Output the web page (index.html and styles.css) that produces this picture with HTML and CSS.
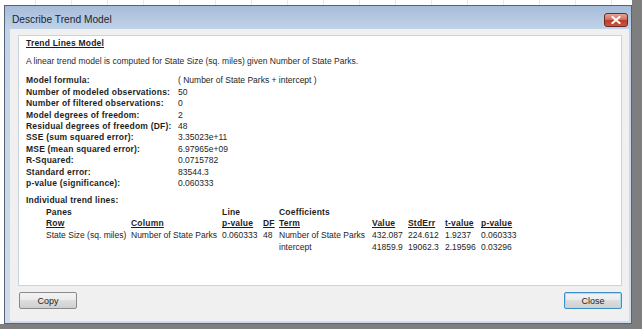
FILE: index.html
```html
<!DOCTYPE html>
<html lang="en">
<head>
  <meta charset="UTF-8" />
  <title>Describe Trend Model</title>
  <link rel="stylesheet" href="styles.css">
</head>
<body>

  <div class="desk">
    <div class="window">
      <div class="titlebar">
        <span class="title">Describe Trend Model</span>
        <button class="close-x" title="Close">
          <svg width="10" height="8" viewBox="0 0 10 8">
            <path d="M1.5 1 L8.5 7 M8.5 1 L1.5 7" stroke="#fff" stroke-width="2" stroke-linecap="square"/>
          </svg>
        </button>
      </div>

      <div class="client">
        <div class="panel">
          <div class="heading">Trend Lines Model</div>
          <div class="desc">A linear trend model is computed for State Size (sq. miles) given Number of State Parks.</div>

          <div class="stats">
            <div class="label">Model formula:</div><div>( Number of State Parks + intercept )</div>
            <div class="label">Number of modeled observations:</div><div>50</div>
            <div class="label">Number of filtered observations:</div><div>0</div>
            <div class="label">Model degrees of freedom:</div><div>2</div>
            <div class="label">Residual degrees of freedom (DF):</div><div>48</div>
            <div class="label">SSE (sum squared error):</div><div>3.35023e+11</div>
            <div class="label">MSE (mean squared error):</div><div>6.97965e+09</div>
            <div class="label">R-Squared:</div><div>0.0715782</div>
            <div class="label">Standard error:</div><div>83544.3</div>
            <div class="label">p-value (significance):</div><div>0.060333</div>
          </div>

          <div class="label section">Individual trend lines:</div>
          <div class="lines">
            <div class="label">Panes</div><div></div><div class="label">Line</div><div></div>
            <div class="label">Coefficients</div><div></div><div></div><div></div><div></div>

            <div class="label u">Row</div><div class="label u">Column</div><div class="label u">p-value</div><div class="label u">DF</div>
            <div class="label u">Term</div><div class="label u">Value</div><div class="label u">StdErr</div><div class="label u">t-value</div><div class="label u">p-value</div>

            <div>State Size (sq. miles)</div><div>Number of State Parks</div><div>0.060333</div><div>48</div>
            <div>Number of State Parks</div><div>432.087</div><div>224.612</div><div>1.9237</div><div>0.060333</div>

            <div></div><div></div><div></div><div></div>
            <div>intercept</div><div>41859.9</div><div>19062.3</div><div>2.19596</div><div>0.03296</div>
          </div>
        </div>

        <div class="buttons">
          <button class="btn">Copy</button>
          <button class="btn btn-default">Close</button>
        </div>
      </div>
    </div>
  </div>

</body>
</html>
```

FILE: styles.css
```css
html, body {
  margin: 0;
  padding: 0;
}
body {
  background: #7e7e7e;
  width: 642px;
  height: 329px;
  overflow: hidden;
  font-family: "Liberation Sans", Arial, sans-serif;
  color: #1e1e1e;
}
.desk {
  width: 632px;
  height: 324px;
  box-sizing: border-box;
  padding: 5px 0 0 4px;
  background-color: #fff;
  background-image: repeating-linear-gradient(90deg, transparent 0, transparent 35px, #e8e8e8 35px, #e8e8e8 36px);
}
.window {
  width: 628px;
  height: 319px;
  box-sizing: border-box;
  border: 1px solid #59636f;
  background: linear-gradient(#a6bcd9, #c2d4ea 24px, #cddcee);
  padding: 0 2px 2px 5px;
  display: flex;
  flex-direction: column;
}
.titlebar {
  height: 23px;
  display: flex;
  justify-content: space-between;
  align-items: flex-start;
}
.title {
  font-size: 10.2px;
  line-height: 14px;
  margin: 7px 0 0 2px;
  color: #1b2633;
}
.close-x {
  width: 24px;
  height: 14px;
  margin: 7px 1px 0 0;
  padding: 0;
  border: 1px solid #6b2a24;
  border-radius: 3px;
  background: linear-gradient(#e5a393, #d27560 45%, #bd3e2a 50%, #c65740);
  display: flex;
  align-items: center;
  justify-content: center;
}
.client {
  flex: 1;
  background: #f0f0f0;
  padding: 6px 7px 0 8px;
  display: flex;
  flex-direction: column;
}
.panel {
  height: 251px;
  box-sizing: border-box;
  background: #fff;
  border: 1px solid #c9d3de;
  padding: 2px 7px;
  font-size: 8.5px;
  line-height: 11.4px;
}
.label {
  font-weight: bold;
  letter-spacing: 0.2px;
}
.heading {
  font-weight: bold;
  letter-spacing: 0.2px;
  text-decoration: underline;
}
.desc {
  margin-top: 6.6px;
  color: #2a2a2a;
}
.stats {
  margin-top: 8px;
  display: grid;
  grid-template-columns: 152px auto;
}
.section {
  margin-top: 6px;
}
.lines {
  margin-left: 20px;
  display: grid;
  grid-template-columns: 85px 91px 41px 16px 93px 36px 37px 36px auto;
  grid-auto-rows: 11.6px;
}
.u {
  text-decoration: underline;
}
.buttons {
  display: flex;
  justify-content: space-between;
  margin-top: 6px;
  padding-left: 1px;
}
.btn {
  width: 58px;
  height: 17px;
  padding: 0;
  border: 1px solid #8a8a8a;
  border-radius: 2px;
  background: linear-gradient(#f3f3f3, #ebebeb 50%, #dddddd 50%, #cfcfcf);
  font-family: "Liberation Sans", Arial, sans-serif;
  font-size: 9px;
  color: #1e1e1e;
}
.btn-default {
  border-color: #3c8fc9;
  box-shadow: inset 0 0 0 1px #a6dcf5;
}
```
